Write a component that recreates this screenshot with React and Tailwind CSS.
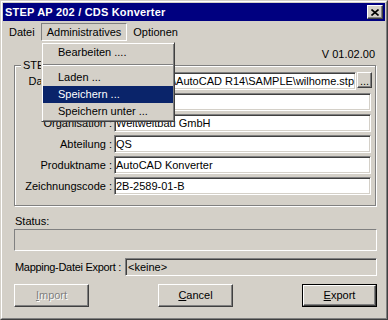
import React from 'react';

const sunken =
  'border border-t-[#808080] border-l-[#808080] border-r-white border-b-white shadow-[inset_1px_1px_0_#404040,inset_-1px_-1px_0_#d4d0c8]';
const raised =
  'border border-t-white border-l-white border-r-[#404040] border-b-[#404040] shadow-[inset_-1px_-1px_0_#808080]';

function Row({ label, children }) {
  return (
    <div className="flex h-[18px] items-center">
      <div className="w-[97px] whitespace-nowrap text-right">{label}</div>
      <div className="ml-[2px] flex h-full">{children}</div>
    </div>
  );
}

function Field({ value, width = 'w-[257px]', right = false }) {
  return (
    <div
      className={`${sunken} ${width} flex h-full items-center overflow-hidden whitespace-nowrap bg-white px-[1px] ${
        right ? 'justify-end' : ''
      }`}
    >
      <span>{value}</span>
    </div>
  );
}

export default function App() {
  return (
    <div className="relative h-[320px] w-[388px] border border-[#d4d0c8] border-r-[#404040] border-b-[#404040] bg-[#d4d0c8] font-['Liberation_Sans',Arial,sans-serif] text-[11px] leading-[13px] text-black">
      <div className="flex h-full flex-col border border-t-white border-l-white border-r-[#808080] border-b-[#808080] p-[1px]">
        {/* title bar */}
        <div className="flex h-[18px] items-center justify-between bg-[#000080] pl-[2px] pr-[2px]">
          <span className="font-bold tracking-[0.2px] text-white">STEP AP 202 / CDS Konverter</span>
          <div className={`${raised} flex h-[14px] w-[16px] items-center justify-center bg-[#d4d0c8]`}>
            <svg width="8" height="7" viewBox="0 0 8 7">
              <path d="M0.5 0.5 L7.5 6.5 M7.5 0.5 L0.5 6.5" stroke="#000" strokeWidth="1.6" />
            </svg>
          </div>
        </div>

        {/* menu bar */}
        <div className="flex h-[20px] items-end">
          <div className="flex h-[18px] items-center px-[6px]">Datei</div>
          <div className="flex h-[18px] items-center border border-t-[#808080] border-l-[#808080] border-r-white border-b-white px-[5px]">
            Administratives
          </div>
          <div className="flex h-[18px] items-center px-[6px]">Optionen</div>
        </div>

        {/* content */}
        <div className="flex flex-1 flex-col pl-[11px] pr-[8px]">
          <div className="mt-[7px] h-[13px] pr-[2px] text-right">V 01.02.00</div>

          <div className="relative mt-[4px] h-[141px] w-[362px] border border-[#808080] pt-[6px] shadow-[inset_1px_1px_0_#fff,1px_1px_0_#fff]">
            <span className="absolute -top-[7px] left-[6px] bg-[#d4d0c8] px-[2px]">STEP Header</span>
            <div className="flex flex-col gap-[3px]">
              <Row label="Dateiname STP :">
                <Field value="C:\Programme\AutoCAD R14\SAMPLE\wilhome.stp" width="w-[242px]" right />
                <div className={`${raised} ml-[1px] flex h-[16px] w-[15px] items-end justify-center bg-[#d4d0c8] pb-[2px] leading-[8px]`}>
                  ...
                </div>
              </Row>
              <Row label="Autor :">
                <Field value="" />
              </Row>
              <Row label="Organisation :">
                <Field value="Weltweitbau GmbH" />
              </Row>
              <Row label="Abteilung :">
                <Field value="QS" />
              </Row>
              <Row label="Produktname :">
                <Field value="AutoCAD Konverter" />
              </Row>
              <Row label="Zeichnungscode :">
                <Field value="2B-2589-01-B" />
              </Row>
            </div>
          </div>

          <div className="mt-[9px] h-[13px] pl-[1px]">Status:</div>
          <div className="mt-[1px] h-[22px] w-[363px] border border-t-[#808080] border-l-[#808080] border-r-white border-b-white" />

          <div className="mt-[7px] flex h-[18px] items-center">
            <div className="w-[111px] whitespace-nowrap pl-[1px] tracking-[-0.3px]">Mapping-Datei Export :</div>
            <div className={`${sunken} flex h-full w-[252px] items-center px-[2px]`}>&lt;keine&gt;</div>
          </div>

          <div className="mt-[8px] flex h-[23px] w-[363px] justify-between">
            <div className={`${raised} flex w-[75px] items-center justify-center text-[#808080] [text-shadow:1px_1px_0_#fff]`}>
              <span>
                <span className="underline">I</span>mport
              </span>
            </div>
            <div className={`${raised} flex w-[75px] items-center justify-center`}>
              <span>
                <span className="underline">C</span>ancel
              </span>
            </div>
            <div className="flex w-[75px] border border-black">
              <div className={`${raised} flex flex-1 items-center justify-center`}>
                <span>
                  <span className="underline">E</span>xport
                </span>
              </div>
            </div>
          </div>
        </div>
      </div>

      {/* open dropdown menu */}
      <div className="absolute left-[40px] top-[41px] w-[134px] border border-t-[#d4d0c8] border-l-[#d4d0c8] border-r-[#404040] border-b-[#404040] bg-[#d4d0c8] p-[1px] shadow-[inset_1px_1px_0_#fff,inset_-1px_-1px_0_#808080]">
        <div className="flex h-[17px] items-center pl-[15px]">Bearbeiten ....</div>
        <div className="flex h-[8px] items-center">
          <div className="h-[2px] w-full border-t border-b border-t-[#808080] border-b-white" />
        </div>
        <div className="flex h-[17px] items-center pl-[15px]">Laden ...</div>
        <div className="flex h-[17px] items-center bg-[#0a246a] pl-[15px] text-white">Speichern ...</div>
        <div className="flex h-[17px] items-center pl-[15px]">Speichern unter ...</div>
      </div>
    </div>
  );
}
